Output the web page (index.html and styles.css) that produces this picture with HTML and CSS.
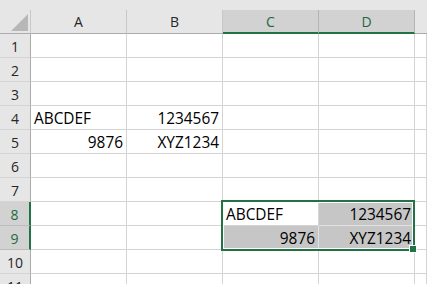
FILE: index.html
```html
<!DOCTYPE html>
<html>
<head>
<meta charset="utf-8">
<link rel="stylesheet" href="styles.css">
</head>
<body>
<div class="topstrip"></div>
<div class="sheet">
  <div class="corner"><svg width="17" height="17" viewBox="0 0 17 17"><polygon points="17,0 17,17 0,17" fill="#b7b7b7"/></svg></div>
  <div class="ch">A</div>
  <div class="ch">B</div>
  <div class="ch ch-sel">C</div>
  <div class="ch ch-sel">D</div>
  <div class="ch ch-last"></div>

  <div class="rh">1</div><div class="c"></div><div class="c"></div><div class="c"></div><div class="c"></div><div class="c"></div>
  <div class="rh">2</div><div class="c"></div><div class="c"></div><div class="c"></div><div class="c"></div><div class="c"></div>
  <div class="rh">3</div><div class="c"></div><div class="c"></div><div class="c"></div><div class="c"></div><div class="c"></div>
  <div class="rh">4</div><div class="c">ABCDEF</div><div class="c r">1234567</div><div class="c"></div><div class="c"></div><div class="c"></div>
  <div class="rh">5</div><div class="c r">9876</div><div class="c r">XYZ1234</div><div class="c"></div><div class="c"></div><div class="c"></div>
  <div class="rh">6</div><div class="c"></div><div class="c"></div><div class="c"></div><div class="c"></div><div class="c"></div>
  <div class="rh">7</div><div class="c"></div><div class="c"></div><div class="c"></div><div class="c"></div><div class="c"></div>
  <div class="rh rh-sel">8</div><div class="c"></div><div class="c"></div><div class="c anchor">ABCDEF<div class="selection"><div class="handle"></div></div></div><div class="c r s">1234567</div><div class="c"></div>
  <div class="rh rh-sel">9</div><div class="c"></div><div class="c"></div><div class="c r s">9876</div><div class="c r s">XYZ1234</div><div class="c"></div>
  <div class="rh">10</div><div class="c"></div><div class="c"></div><div class="c"></div><div class="c"></div><div class="c"></div>
  <div class="rh">11</div><div class="c"></div><div class="c"></div><div class="c"></div><div class="c"></div><div class="c"></div>
</div>
</body>
</html>
```
FILE: styles.css
```css
html, body {
  margin: 0;
  padding: 0;
  background: #ffffff;
  overflow: hidden;
}
body {
  width: 427px;
  height: 284px;
}
.topstrip {
  height: 10px;
  background: #e6e6e6;
}
.sheet {
  display: grid;
  grid-template-columns: 31px repeat(4, 96px) 1fr;
  grid-auto-rows: 24px;
}
.sheet > div {
  box-sizing: border-box;
  min-width: 0;
  overflow: hidden;
}
.corner {
  background: #e6e6e6;
  border-right: 1px solid #c8c8c8;
  border-bottom: 1px solid #ababab;
  display: flex;
  justify-content: flex-end;
  align-items: flex-end;
  padding: 0 2px 2px 0;
}
.corner svg { display: block; }
.ch {
  background: #e6e6e6;
  border-right: 1px solid #c8c8c8;
  border-bottom: 1px solid #ababab;
  font-family: "Open Sans", sans-serif;
  font-size: 14px;
  line-height: 23px;
  text-align: center;
  color: #262626;
}
.ch-sel {
  background: #d2d2d2;
  color: #1c6a3e;
  border-right-color: #b4b4b4;
  border-bottom: 2px solid #217346;
}
.ch-last {
  border-right: none;
}
.rh {
  background: #e6e6e6;
  border-right: 1px solid #ababab;
  border-bottom: 1px solid #d4d4d4;
  font-family: "Open Sans", sans-serif;
  font-size: 14px;
  line-height: 23px;
  padding-top: 1px;
  text-align: center;
  color: #262626;
}
.rh-sel {
  background: #d2d2d2;
  color: #1c6a3e;
  border-right: 2px solid #217346;
  border-bottom-color: #bdbdbd;
}
.c {
  border-right: 1px solid #d4d4d4;
  border-bottom: 1px solid #d4d4d4;
  font-family: "Open Sans", sans-serif;
  font-size: 15.4px;
  line-height: 23px;
  padding: 1px 3px 0 3px;
  color: #000000;
  white-space: nowrap;
}
.r {
  text-align: right;
}
.s {
  background: #c6c6c6;
  border-color: #e2e2e2;
}
.sheet > .anchor {
  position: relative;
  overflow: visible;
}
.selection {
  position: absolute;
  left: -2px;
  top: -2px;
  width: 194px;
  height: 51px;
  box-sizing: border-box;
  border: 2px solid #217346;
  box-shadow: inset 0 0 0 1px #ffffff;
  pointer-events: none;
  z-index: 2;
}
.handle {
  position: absolute;
  right: -4px;
  bottom: -4px;
  width: 6px;
  height: 6px;
  background: #217346;
  border: 1px solid #ffffff;
}
```
